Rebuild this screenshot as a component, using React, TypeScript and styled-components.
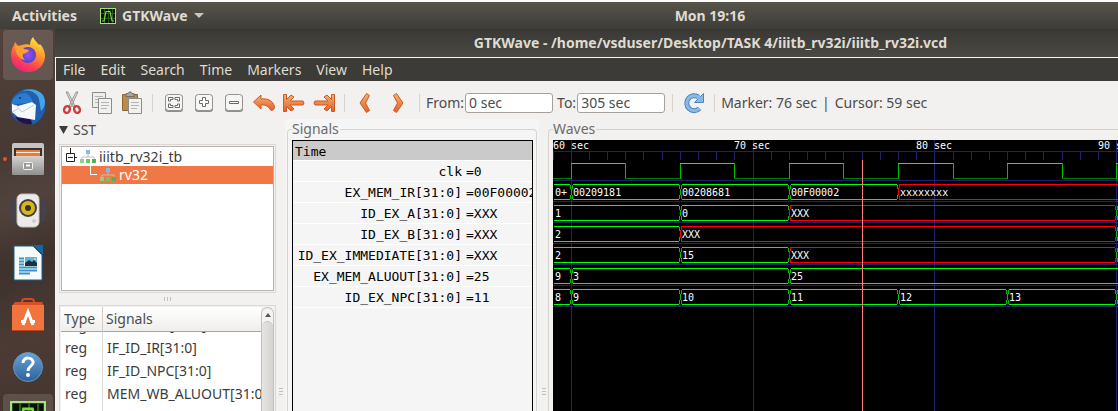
import React, { useEffect, useRef } from "react";
import styled, { createGlobalStyle } from "styled-components";

const UI = `"Noto Sans", "Open Sans", sans-serif`;
const MONO = `"DejaVu Sans Mono", "Liberation Mono", monospace`;

const Global = createGlobalStyle`
  * { box-sizing: border-box; }
  html, body, #root { height: 100%; margin: 0; }
  body { overflow: hidden; background: #fff; font: 14px/20px ${UI}; color: #4c4c4c; }
  button, input { font: inherit; color: inherit; }
`;

const Desktop = styled.div`
  display: flex;
  flex-direction: column;
  height: 100%;
  padding-top: 2px;
`;

const TopBar = styled.header`
  display: grid;
  grid-template-columns: 1fr auto 1fr;
  align-items: center;
  flex: none;
  height: 27px;
  padding: 0 12px;
  background: linear-gradient(#57544b, #3e3d38);
  color: #dfdbd2;
  font-weight: 700;
`;

const TopLeft = styled.div`
  display: flex;
  gap: 23px;
`;

const BarButton = styled.button`
  display: flex;
  align-items: center;
  gap: 6px;
  height: 24px;
  padding: 0;
  border: 0;
  background: none;
`;

const Clock = styled.time`
  margin-left: 302px;
`;

const Main = styled.div`
  display: flex;
  flex: 1;
  min-height: 0;
`;

const Dock = styled.nav`
  display: flex;
  flex-direction: column;
  align-items: center;
  gap: 2px;
  flex: none;
  width: 55px;
  padding-top: 1px;
  overflow: hidden;
  background: linear-gradient(160deg, #54423b, #463934 30%, #51423c 45%, #3e322d 60%, #4b3b34 80%, #43362f);
`;

const DockItem = styled.button<{ $active?: boolean; $running?: boolean }>`
  position: relative;
  display: grid;
  place-items: center;
  flex: none;
  width: 50px;
  height: 50px;
  padding: 0;
  border: 0;
  border-radius: 4px;
  background: ${(p) => (p.$active ? "rgba(255,255,255,.13)" : "none")};
  &::before {
    content: "";
    display: ${(p) => (p.$running ? "block" : "none")};
    position: absolute;
    left: 0;
    top: 23px;
    width: 4px;
    height: 4px;
    border-radius: 50%;
    background: #e95420;
  }
`;

const Window = styled.section`
  display: flex;
  flex-direction: column;
  flex: 1;
  min-width: 0;
`;

const TitleBar = styled.h1`
  flex: none;
  height: 28px;
  margin: 0;
  padding-left: 248px;
  background: linear-gradient(#393834, #4b4943);
  color: #dfdbd2;
  font-size: 14px;
  font-weight: 700;
  line-height: 28px;
  text-align: center;
  white-space: nowrap;
`;

const Client = styled.div`
  display: flex;
  flex-direction: column;
  flex: 1;
  min-height: 0;
  border: solid #f6f5f4;
  border-width: 1px 0 0 1px;
  background: #f2f1f0;
`;

const MenuBar = styled.nav`
  display: flex;
  align-items: center;
  gap: 15px;
  flex: none;
  height: 23px;
  padding: 0 7px;
  background: #3c3b37;
  color: #dfdbd2;
`;

const MenuButton = styled.button`
  padding: 0;
  border: 0;
  background: none;
`;

const Toolbar = styled.div`
  display: flex;
  align-items: center;
  flex: none;
  height: 38px;
  padding: 5px 0 0 1px;
  white-space: nowrap;
`;

const ToolButton = styled.button<{ $wide?: boolean }>`
  display: grid;
  place-items: center;
  flex: none;
  width: ${(p) => (p.$wide ? 33 : 30)}px;
  height: 30px;
  padding: 0;
  border: 0;
  background: none;
`;

const Divider = styled.span`
  flex: none;
  width: 1px;
  height: 18px;
  margin: 0 6px 0 5px;
  background: #d6d4d1;
`;

const TimeRange = styled.div`
  display: flex;
  gap: 4px;
  padding-right: 2px;
`;

const TimeField = styled.label`
  display: flex;
  align-items: center;
  gap: 1px;
`;

const TimeInput = styled.input`
  width: 88px;
  height: 20px;
  padding: 0 3px;
  border: 1px solid #a5a29d;
  border-radius: 3px;
  background: #fff;
`;

const Status = styled.output`
  display: flex;
  gap: 5px;
`;

const Panes = styled.div`
  display: flex;
  flex: 1;
  min-height: 0;
`;

const Sidebar = styled.aside`
  display: flex;
  flex-direction: column;
  flex: none;
  width: 220px;
  padding-left: 3px;
`;

const SstHeader = styled.button`
  display: flex;
  align-items: center;
  gap: 5px;
  flex: none;
  height: 25px;
  padding: 0 0 3px;
  border: 0;
  background: none;
`;

const Box = styled.div<{ $grow?: boolean }>`
  flex: ${(p) => (p.$grow ? "1" : "none")};
  min-height: 0;
  border: solid #dad7d4;
  border-width: 1px 1px ${(p) => (p.$grow ? 0 : 1)}px;
  padding: 1px 1px ${(p) => (p.$grow ? 0 : 1)}px;
  display: flex;
`;

const Tree = styled.ul`
  flex: 1;
  height: 145px;
  margin: 0;
  padding: 1px 0 0;
  border: 1px solid #b6b3ae;
  background: #fff;
  list-style: none;
`;

const TreeRow = styled.li<{ $selected?: boolean; $depth: number }>`
  display: flex;
  align-items: center;
  gap: 3px;
  height: 18px;
  padding-left: ${(p) => 4 + p.$depth * 20}px;
  background: ${(p) => (p.$selected ? "#f07746" : "none")};
  color: ${(p) => (p.$selected ? "#fff" : "#3c3c3c")};
  line-height: 18px;
`;

const HGrip = styled.div`
  display: flex;
  align-items: center;
  justify-content: center;
  gap: 2px;
  flex: none;
  height: 12px;
`;

const VGrip = styled.div`
  display: flex;
  flex-direction: column;
  align-items: center;
  gap: 2px;
  flex: none;
  width: 9px;
  padding-top: 269px;
`;

const Notch = styled.i<{ $flat?: boolean }>`
  flex: none;
  width: ${(p) => (p.$flat ? 4 : 1)}px;
  height: ${(p) => (p.$flat ? 1 : 4)}px;
  background: #c4c1bd;
`;

const Viewport = styled.div`
  flex: 1;
  min-width: 0;
  overflow: hidden;
  background: #fff;
`;

const SignalTable = styled.table`
  width: 100%;
  border-collapse: separate;
  border-spacing: 0;
  table-layout: fixed;
  color: #3c3c3c;
`;

const Th = styled.th<{ $w?: number }>`
  position: sticky;
  top: 0;
  width: ${(p) => (p.$w ? `${p.$w}px` : "auto")};
  height: 25px;
  padding: 0 3px;
  border-right: ${(p) => (p.$w ? "1px solid #d0cdca" : "0")};
  border-bottom: 1px solid #a8a5a1;
  background: linear-gradient(#fff, #efeeec);
  color: #4c4c4c;
  font-weight: 400;
  text-align: left;
`;

const Td = styled.td<{ $line?: boolean }>`
  height: 23px;
  padding: 0 4px;
  border-right: ${(p) => (p.$line ? "1px solid #dddbd9" : "0")};
  overflow: hidden;
  line-height: 20px;
  white-space: nowrap;
`;

const ScrollTrack = styled.div`
  display: flex;
  flex-direction: column;
  flex: none;
  width: 13px;
  border: solid #c3c0bc;
  border-width: 1px 1px 0;
  border-radius: 7px 7px 0 0;
  background: #f4f3f2;
`;

const ScrollUp = styled.button`
  display: grid;
  place-items: center;
  flex: none;
  width: 100%;
  height: 13px;
  padding: 0;
  border: 0;
  background: none;
`;

const ScrollThumb = styled.div`
  flex: 1;
  border-top: 1px solid #c3c0bc;
  border-radius: 6px 6px 0 0;
  background: linear-gradient(90deg, #e6e4e2, #d5d3d0);
`;

const SignalsPane = styled.section`
  display: flex;
  flex: none;
  width: 254px;
  padding: 0 2px;
  background: #f5f5f5;
`;

const WavesPane = styled.section`
  display: flex;
  flex: 1;
  min-width: 0;
`;

const Frame = styled.fieldset<{ $open?: boolean }>`
  display: flex;
  flex-direction: column;
  flex: 1;
  min-width: 0;
  margin: 0;
  padding: 0 ${(p) => (p.$open ? 0 : 3)}px 0 4px;
  border: solid #d6d4d1;
  border-width: 1px ${(p) => (p.$open ? 0 : 1)}px 0 1px;
  border-radius: 4px ${(p) => (p.$open ? 0 : 4)}px 0 0;
`;

const FrameTitle = styled.legend`
  height: 21px;
  padding: 0 1px 0 0;
  color: #6c6b69;
`;

const SignalList = styled.div`
  flex: 1;
  min-height: 0;
  overflow: hidden;
  border: solid #000;
  border-width: 1px 1px 0;
  color: #000;
  font: 13px/20px ${MONO};
`;

const TimeHeader = styled.div`
  height: 20px;
  padding: 1px 2px 0;
  border-bottom: 1px solid #fff;
  background: #cacaca;
`;

const SignalRow = styled.div`
  display: grid;
  grid-template-columns: 169px minmax(0, 1fr);
  column-gap: 4px;
  height: 21px;
  padding-top: 1px;
  border-bottom: 1px solid #fff;
  white-space: nowrap;
  span:first-child { text-align: right; }
`;

const WaveCanvas = styled.svg`
  flex: 1;
  width: 100%;
  min-height: 0;
  background: #000;
  font: 10px ${MONO};
`;

const TreeNodeIcon = () => (
  <svg width="16" height="14" viewBox="0 0 16 14" aria-hidden="true">
    <path d="M8 4v3M2 10V7h12v3" fill="none" stroke="#b9c4b5" />
    <rect x="6" y="0" width="4" height="4" fill="#8fb8e8" />
    <rect x="0" y="9" width="4" height="4" fill="#8ed08a" />
    <rect x="6" y="9" width="4" height="4" fill="#6cc56c" />
    <rect x="12" y="9" width="4" height="4" fill="#4fb457" />
  </svg>
);

const GtkWaveIcon = ({ size }: { size: number }) => (
  <svg width={size} height={size} viewBox="0 0 16 16" aria-hidden="true">
    <rect x=".5" y=".5" width="15" height="15" fill="#061006" stroke="#a6e07c" />
    <path d="M4.500 1v14M8.500 1v14M12.500 1v14M1 5.500h14M1 10.500h14" stroke="#2b5d1c" />
    <path d="M2 13h2l2-9.500h4L12 13h2" fill="none" stroke="#7ddc3c" strokeWidth="1.200" />
  </svg>
);

const Firefox = () => (
  <svg width="36" height="36" viewBox="0 0 36 36" aria-hidden="true">
    <defs>
      <linearGradient id="fx" x1=".8" y1="0" x2=".3" y2="1">
        <stop offset="0" stopColor="#fff04a" />
        <stop offset=".4" stopColor="#ff9a2a" />
        <stop offset=".75" stopColor="#ff4050" />
        <stop offset="1" stopColor="#e8208a" />
      </linearGradient>
      <radialGradient id="fxc"><stop offset="0" stopColor="#9a4cff" /><stop offset="1" stopColor="#5546c8" /></radialGradient>
    </defs>
    <path d="M23 0c1 3 4 5 6 8l1-1c3 3 5 8 5 12 0 9-7 16-17 16S1 28 1 18c0-4 1-7 3-10l1-3 3 4 4-1c3-1 6-1 8 0 0-3 1-6 3-8z" fill="url(#fx)" />
    <circle cx="18" cy="18" r="8" fill="url(#fxc)" />
    <path d="M5 9c4-1 7 0 9 3l5 1c-1 3-4 3-6 4-1 2 0 4 2 6-6-1-9-5-10-14z" fill="#ffa02c" />
  </svg>
);

const Thunderbird = () => (
  <svg width="38" height="38" viewBox="0 0 38 38" aria-hidden="true">
    <path d="M12 3C18-1 29 1 34 10c5 10 1 21-9 26-8 1-18-1-22-9C-1 17 3 6 12 3z" fill="#1f5fae" />
    <path d="M10 5c7-5 17-2 20 6l2 12c4-4 5-9 3-14C32 2 20-2 10 5z" fill="#46a3e6" />
    <path d="M6 29c4 6 11 8 17 7l-1-5z" fill="#20124f" />
    <path d="M2 17c1-7 6-12 14-12 4 1 6 5 8 9z" fill="#2b7cd0" />
    <path d="M3 16l6 2 14-4 4 3-1 15L9 29 3 24z" fill="#f7f8fa" />
    <path d="M7 17l6 7 12-7M3 24l6-3" fill="none" stroke="#c3cbd6" />
    <circle cx="11" cy="10" r="1" fill="#12335f" />
  </svg>
);

const Files = () => (
  <svg width="34" height="34" viewBox="0 0 34 34" aria-hidden="true">
    <defs><linearGradient id="fl" x2="0" y2="1"><stop stopColor="#d2d2d0" /><stop offset="1" stopColor="#8f8f8d" /></linearGradient></defs>
    <rect x="1" y="1" width="32" height="32" rx="2" fill="#c4c4c2" />
    <path d="M3 6h28v9H3z" fill="#3a3230" />
    <path d="M5 8h24v7H5z" fill="#f27835" />
    <path d="M5 10h24v1H5z" fill="#fff0e0" />
    <path d="M1 14h32v17a2 2 0 0 1-2 2H3a2 2 0 0 1-2-2z" fill="url(#fl)" />
    <rect x="12.500" y="20.500" width="9" height="7" rx="1" fill="#999" stroke="#f5f5f5" />
    <path d="M15 23.500h4" stroke="#fff" strokeWidth="2" />
  </svg>
);

const Rhythmbox = () => (
  <svg width="38" height="36" viewBox="0 0 38 36" aria-hidden="true">
    <path d="M5 6Q0 17 5 28M33 6q5 11 0 22" fill="none" stroke="#3e4558" strokeWidth="3" />
    <rect x="8" y="1" width="22" height="33" rx="5" fill="#ecebea" stroke="#c4c2bf" />
    <circle cx="19" cy="15" r="9" fill="#3f3f3f" />
    <circle cx="19" cy="15" r="7" fill="#d9b61c" />
    <circle cx="19" cy="15" r="3" fill="#3a3416" />
    <circle cx="25" cy="28" r="2" fill="#d0cecb" />
  </svg>
);

const Writer = () => (
  <svg width="30" height="36" viewBox="0 0 30 36" aria-hidden="true">
    <path d="M1 1h19l9 9v25H1z" fill="#f8f9fa" stroke="#12608f" />
    <path d="M20 0h10v10z" fill="#0b6aa8" />
    <path d="M6 13.500h5M6 16.500h5M6 19.500h5M6 22.500h18M6 25.500h18M6 28.500h11" stroke="#3694c8" strokeWidth="2" />
    <rect x="12" y="12" width="12" height="9" fill="#5cb3e4" />
    <path d="M12 18l4-3 3 2 2-2 3 3v3H12z" fill="#20303a" />
    <circle cx="22" cy="14" r="1" fill="#ffe14d" />
  </svg>
);

const Software = () => (
  <svg width="34" height="36" viewBox="0 0 34 36" aria-hidden="true">
    <path d="M11 9V5q0-3 3-3h6q3 0 3 3v4" fill="none" stroke="#d64a20" strokeWidth="2" />
    <path d="M4 5h27l2 4H1z" fill="#d94f24" />
    <path d="M1 8h32v26H1z" fill="#f0743c" />
    <path d="M1 33h32v1H1z" fill="#b8411c" />
    <path d="M12 28l5-13 5 13M10 24.500h5M19 24.500h5" fill="none" stroke="#fff" strokeWidth="3" />
  </svg>
);

const HelpIcon = () => (
  <svg width="32" height="32" viewBox="0 0 32 32" aria-hidden="true">
    <defs><linearGradient id="hp" x2="0" y2="1"><stop stopColor="#6aa3d8" /><stop offset="1" stopColor="#2c6299" /></linearGradient></defs>
    <circle cx="16" cy="16" r="14.500" fill="url(#hp)" stroke="#6b93b8" />
    <path d="M11 12c0-7 11-6 10 0-1 4-5 3-5 8" fill="none" stroke="#fff" strokeWidth="3" />
    <circle cx="16" cy="24" r="2" fill="#fff" />
  </svg>
);

const OrangeIcon = ({ d }: { d: string }) => (
  <svg width="24" height="24" viewBox="0 0 24 24" aria-hidden="true">
    <defs>
      <linearGradient id="or" x2="0" y2="1">
        <stop stopColor="#f3b273" />
        <stop offset="1" stopColor="#e4602a" />
      </linearGradient>
    </defs>
    <path d={d} fill="url(#or)" stroke="#cf5a20" strokeLinejoin="round" />
  </svg>
);

const CutIcon = () => (
  <svg width="20" height="24" viewBox="0 0 20 24" aria-hidden="true">
    <path d="M4 1l2 0 7 14-2 1zM16 1l-2 0-7 14 2 1z" fill="#d6d6d4" stroke="#8a8a88" strokeWidth=".8" />
    <ellipse cx="5" cy="18.500" rx="2.800" ry="3.500" fill="none" stroke="#cf3b40" strokeWidth="2.400" transform="rotate(25 5 18.500)" />
    <ellipse cx="15" cy="18.500" rx="2.800" ry="3.500" fill="none" stroke="#cf3b40" strokeWidth="2.400" transform="rotate(-25 15 18.500)" />
  </svg>
);

const CopyIcon = () => (
  <svg width="22" height="24" viewBox="0 0 22 24" aria-hidden="true">
    <path d="M1.500 1.500h13v15h-13z" fill="#ececea" stroke="#8b8d88" />
    <path d="M4 5.500h8M4 8.500h8M4 11.500h4" stroke="#b4b5b2" />
    <path d="M7.500 7.500h13v15h-13z" fill="#f1f1ef" stroke="#8b8d88" />
    <path d="M10 11.500h8M10 14.500h8M10 17.500h6" stroke="#b4b5b2" />
  </svg>
);

const PasteIcon = () => (
  <svg width="22" height="24" viewBox="0 0 22 24" aria-hidden="true">
    <path d="M1.500 3.500h15v16h-15z" fill="#bb8a4c" stroke="#8d6532" />
    <path d="M5 2.500h2L8 1h2l1 1.500h2v3H5z" fill="#a7a7a5" stroke="#666" strokeWidth=".8" />
    <path d="M7.500 7.500h13v15h-13z" fill="#f1f1ef" stroke="#8b8d88" />
    <path d="M10 11.500h8M10 14.500h8M10 17.500h6" stroke="#b4b5b2" />
  </svg>
);

const ZoomIcon = ({ d }: { d: string }) => (
  <svg width="20" height="22" viewBox="0 0 20 22" aria-hidden="true">
    <rect x="1" y="3" width="18" height="17" rx="3" fill="#8d8d8b" />
    <rect x="1.500" y="2.500" width="17" height="16" rx="3" fill="#f6f6f5" stroke="#92928f" />
    <path d={d} fill="#fff" stroke="#6b6b69" />
  </svg>
);

const ReloadIcon = () => (
  <svg width="22" height="22" viewBox="0 0 22 22" aria-hidden="true">
    <path d="M16.500 16.500A7.500 7.500 0 1 1 15.500 5" fill="none" stroke="#4a86c4" strokeWidth="5" />
    <path d="M20.500 1.500v9h-9z" fill="#8db8e2" stroke="#4a86c4" />
    <path d="M16.500 16.500A7.500 7.500 0 1 1 15.500 5l1.500 1.500" fill="none" stroke="#8db8e2" strokeWidth="3" />
  </svg>
);

const PX_PER_TICK = 200 / 11;
const tickX = (k: number) => Math.floor(k * PX_PER_TICK + 0.01);

const MAJORS = [1, 11, 21, 31, 41, 51];
const CLK_EDGES = [1, 4, 7, 10, 13, 16, 19, 22, 25, 28, 31];

type Segment = [start: number, label: string, undef?: boolean];
const VECTORS: Segment[][] = [
  [[0, "0+"], [1, "00209181"], [7, "00208681"], [13, "00F00002"], [19, "xxxxxxxx", true]],
  [[0, "1"], [7, "0"], [13, "XXX", true], [31, ""]],
  [[0, "2"], [7, "XXX", true], [31, ""]],
  [[0, "2"], [7, "15"], [13, "XXX", true], [31, ""]],
  [[0, "9"], [1, "3"], [13, "25"]],
  [[0, "8"], [1, "9"], [7, "10"], [13, "11"], [19, "12"], [25, "13"], [31, ""]],
];

const FAR = 4000;

const Vector = ({ row, segments }: { row: number; segments: Segment[] }) => {
  const top = 44 + row * 21;
  return (
    <g>
      {segments.map(([start, label, undef], i) => {
        const x = tickX(start);
        const next = segments[i + 1];
        const end = next ? tickX(next[0]) : FAR;
        const left = start === 0 || undef ? x + 1 : x + 2;
        const line = undef ? "#f00" : "#0f0";
        const edge = undef ? "#f00" : "#00c000";
        return (
          <g key={start}>
            <rect x={left} y={top} width={end - 1 - left} height="1" fill={line} />
            <rect x={left} y={top + 15} width={end - 1 - left} height="1" fill={line} />
            {start > 0 && (
              <path
                d={undef
                  ? `M${x + 1.5} ${top}v4M${x + 0.5} ${top + 4}v8M${x + 1.5} ${top + 12}v4`
                  : `M${x + 1.5} ${top + 1}v4M${x + 0.5} ${top + 5}v6M${x + 1.5} ${top + 11}v4`}
                stroke={edge}
              />
            )}
            {next && (
              <path
                d={`M${end - 0.5} ${top + 1}v4M${end - 0.5} ${top + 11}v4`}
                stroke={edge}
              />
            )}
            <text x={start === 0 ? 2 : x + 2} y={top + 12} fill="#fff">{label}</text>
          </g>
        );
      })}
    </g>
  );
};

const Waves = () => (
  <WaveCanvas role="img" aria-label="Waveforms" shapeRendering="crispEdges">
    {MAJORS.map((k) => <rect key={k} x={tickX(k)} y="0" width="1" height="100%" fill="#202070" />)}
    <rect x="0" y="11" width="100%" height="1" fill="#202070" />
    {Array.from({ length: 60 }, (_, k) => (
      <rect key={k} x={tickX(k)} y="11" width="1" height="9" fill="#202070" />
    ))}
    {Array.from({ length: 7 }, (_, r) => (
      <rect key={r} x="0" y={40 + r * 21} width="100%" height="1" fill="#202070" />
    ))}
    {[60, 70, 80, 90].map((t, i) => (
      <text key={t} x={tickX(i * 10)} y="9" fill="#fff">{`${t} sec`}</text>
    ))}
    <rect x="0" y="38" width={tickX(1)} height="1" fill="#008000" />
    {CLK_EDGES.map((k, i) => {
      const high = i % 2 === 0;
      return (
        <g key={k}>
          <rect x={tickX(k)} y="23" width="1" height="16" fill="#00c000" />
          <rect x={tickX(k)} y={high ? 23 : 38} width={tickX(k + 3) - tickX(k)} height="1" fill={high ? "#0f0" : "#008000"} />
        </g>
      );
    })}
    {VECTORS.map((segments, r) => <Vector key={r} row={r} segments={segments} />)}
    <rect x={tickX(17)} y="20" width="1" height="100%" fill="#ff8080" />
  </WaveCanvas>
);

const SIGNALS = [
  ["clk", "0"],
  ["EX_MEM_IR[31:0]", "00F00002"],
  ["ID_EX_A[31:0]", "XXX"],
  ["ID_EX_B[31:0]", "XXX"],
  ["ID_EX_IMMEDIATE[31:0]", "XXX"],
  ["EX_MEM_ALUOUT[31:0]", "25"],
  ["ID_EX_NPC[31:0]", "11"],
];

const REGS = ["ID_EX_RD[31:0]", "IF_ID_IR[31:0]", "IF_ID_NPC[31:0]", "MEM_WB_ALUOUT[31:0]", "MEM_WB_IR[31:0]", "MEM_WB_LDM[31:0]"];

const RegisterTable = () => {
  const view = useRef<HTMLDivElement>(null);
  useEffect(() => {
    if (view.current) view.current.scrollTop = 19;
  }, []);
  return (
    <Viewport ref={view}>
      <SignalTable>
        <thead>
          <tr><Th $w={42}>Type</Th><Th>Signals</Th></tr>
        </thead>
        <tbody>
          {REGS.map((name) => (
            <tr key={name}><Td $line>reg</Td><Td>{name}</Td></tr>
          ))}
        </tbody>
      </SignalTable>
    </Viewport>
  );
};

export default function App() {
  return (
    <Desktop>
      <Global />
      <TopBar>
        <TopLeft>
          <BarButton>Activities</BarButton>
          <BarButton>
            <GtkWaveIcon size={16} />
            GTKWave
            <svg width="10" height="6" viewBox="0 0 10 6" aria-hidden="true"><path d="M0 0h10L5 5z" fill="#c9c5bc" /></svg>
          </BarButton>
        </TopLeft>
        <Clock>Mon 19:16</Clock>
      </TopBar>
      <Main>
        <Dock aria-label="Dock">
          <DockItem $active aria-label="Firefox"><Firefox /></DockItem>
          <DockItem aria-label="Thunderbird"><Thunderbird /></DockItem>
          <DockItem $running aria-label="Files"><Files /></DockItem>
          <DockItem aria-label="Rhythmbox"><Rhythmbox /></DockItem>
          <DockItem aria-label="Writer"><Writer /></DockItem>
          <DockItem aria-label="Software"><Software /></DockItem>
          <DockItem aria-label="Help"><HelpIcon /></DockItem>
          <DockItem $active aria-label="GTKWave"><GtkWaveIcon size={36} /></DockItem>
        </Dock>
        <Window>
          <TitleBar>GTKWave - /home/vsduser/Desktop/TASK 4/iiitb_rv32i/iiitb_rv32i.vcd</TitleBar>
          <Client>
            <MenuBar>
              {["File", "Edit", "Search", "Time", "Markers", "View", "Help"].map((m) => (
                <MenuButton key={m}>{m}</MenuButton>
              ))}
            </MenuBar>
            <Toolbar>
              <ToolButton aria-label="Cut"><CutIcon /></ToolButton>
              <ToolButton aria-label="Copy"><CopyIcon /></ToolButton>
              <ToolButton aria-label="Paste"><PasteIcon /></ToolButton>
              <Divider />
              <ToolButton aria-label="Zoom fit"><ZoomIcon d="M4.500 9V5.500H9v2H6.500V9zM11 5.500h4.500V9h-2V7.500H11zM4.500 12v3.500H9v-2H6.500V12zM15.500 12v3.500H11v-2h2.500V12z" /></ToolButton>
              <ToolButton aria-label="Zoom in"><ZoomIcon d="M8.500 5.500h3v3h3v3h-3v3h-3v-3h-3v-3h3z" /></ToolButton>
              <ToolButton aria-label="Zoom out"><ZoomIcon d="M5.500 9.500h9v2h-9z" /></ToolButton>
              <ToolButton aria-label="Undo zoom"><OrangeIcon d="M1.500 11L9 4v4c7-1 12 2 13.500 7.500.5 2-2 5-4 3.500C17 16 14 13.500 9 14v4z" /></ToolButton>
              <ToolButton aria-label="To start"><OrangeIcon d="M1.500 3.500h3v5L9 4l3 2-4 4h13q2 2 0 4H8l4 4-3 2-4.500-4.500v5h-3z" /></ToolButton>
              <ToolButton aria-label="To end"><OrangeIcon d="M22.500 3.500h-3v5L15 4l-3 2 4 4H3q-2 2 0 4h13l-4 4 3 2 4.500-4.500v5h3z" /></ToolButton>
              <Divider />
              <ToolButton aria-label="Previous edge"><OrangeIcon d="M12.500 2.500l3 2-4 7.500 4 7.500-3 2L6 12z" /></ToolButton>
              <ToolButton $wide aria-label="Next edge"><OrangeIcon d="M10.500 2.500l-3 2 4 7.500-4 7.500 3 2L17 12z" /></ToolButton>
              <Divider />
              <TimeRange>
                <TimeField>From:<TimeInput defaultValue="0 sec" /></TimeField>
                <TimeField>To:<TimeInput defaultValue="305 sec" /></TimeField>
              </TimeRange>
              <Divider />
              <ToolButton aria-label="Reload"><ReloadIcon /></ToolButton>
              <Divider />
              <Status><span>Marker: 76 sec</span><span>|</span><span>Cursor: 59 sec</span></Status>
            </Toolbar>
            <Panes>
              <Sidebar>
                <SstHeader>
                  <svg width="9" height="8" viewBox="0 0 9 8" aria-hidden="true"><path d="M0 0h9L4.500 8z" fill="#3c3c3c" /></svg>
                  SST
                </SstHeader>
                <Box>
                  <Tree>
                    <TreeRow $depth={0}>
                      <svg width="11" height="18" viewBox="0 0 11 18" aria-hidden="true"><path d="M4.500 0v5M.5 5.500h8v8h-8zM2 9.500h5M9 9.500h2" fill="none" stroke="#222" /></svg>
                      <TreeNodeIcon />
                      iiitb_rv32i_tb
                    </TreeRow>
                    <TreeRow $depth={1} $selected>
                      <svg width="11" height="18" viewBox="0 0 11 18" aria-hidden="true"><path d="M4.500 0v8.500H11" fill="none" stroke="#fff" /></svg>
                      <TreeNodeIcon />
                      rv32
                    </TreeRow>
                  </Tree>
                </Box>
                <HGrip><Notch /><Notch /><Notch /></HGrip>
                <Box $grow>
                  <RegisterTable />
                  <ScrollTrack>
                    <ScrollUp aria-label="Scroll up">
                      <svg width="6" height="4" viewBox="0 0 6 4" aria-hidden="true"><path d="M0 4h6L3 0z" fill="#555" /></svg>
                    </ScrollUp>
                    <ScrollThumb />
                  </ScrollTrack>
                </Box>
              </Sidebar>
              <VGrip><Notch $flat /><Notch $flat /><Notch $flat /></VGrip>
              <SignalsPane>
                <Frame>
                  <FrameTitle>Signals</FrameTitle>
                  <SignalList>
                    <TimeHeader>Time</TimeHeader>
                    {SIGNALS.map(([name, value]) => (
                      <SignalRow key={name}><span>{name}</span><span>={value}</span></SignalRow>
                    ))}
                  </SignalList>
                </Frame>
              </SignalsPane>
              <VGrip><Notch $flat /><Notch $flat /><Notch $flat /></VGrip>
              <WavesPane>
                <Frame $open>
                  <FrameTitle>Waves</FrameTitle>
                  <Waves />
                </Frame>
              </WavesPane>
            </Panes>
          </Client>
        </Window>
      </Main>
    </Desktop>
  );
}
